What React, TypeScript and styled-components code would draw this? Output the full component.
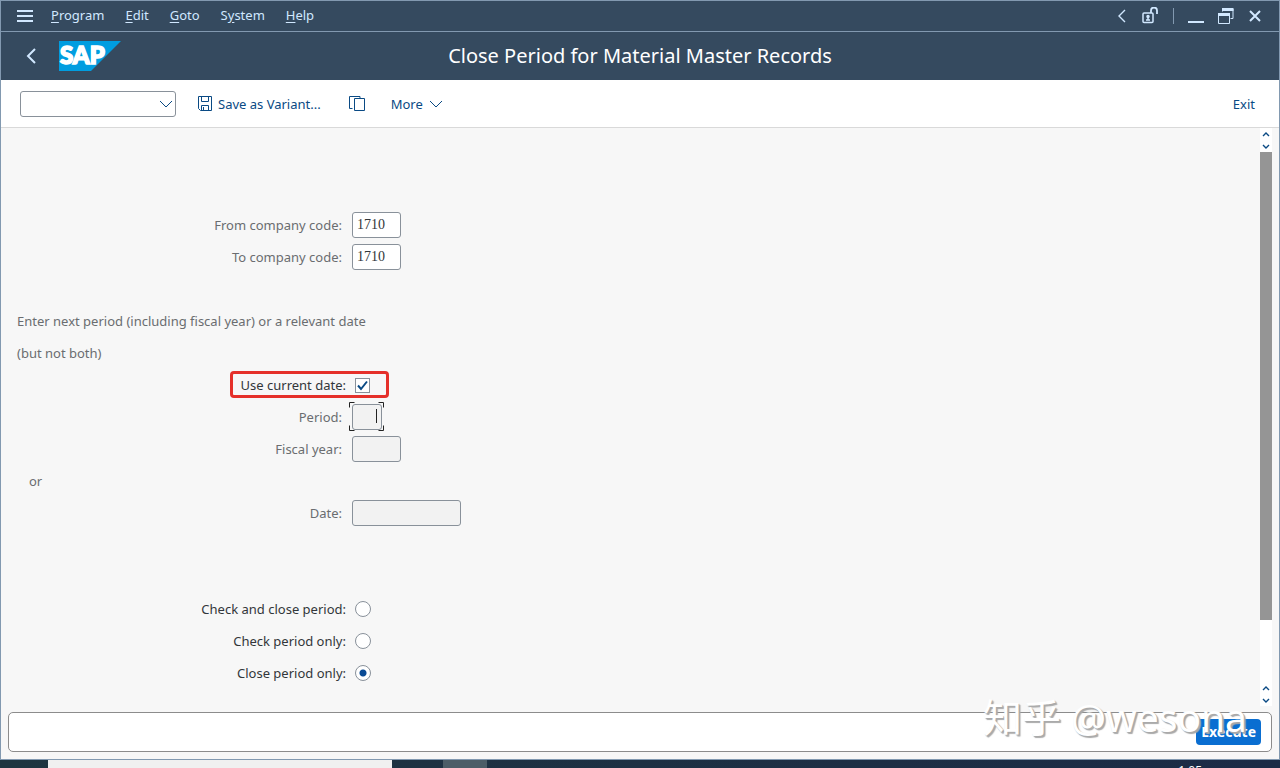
import React from 'react';
import styled, { createGlobalStyle, css } from 'styled-components';

const Global = createGlobalStyle`
  * { box-sizing: border-box; }
  html, body { margin: 0; }
  body, button, input, select {
    font-family: "Noto Sans", sans-serif;
    font-size: 13px;
    line-height: 20px;
  }
`;

const Desktop = styled.div`
  height: 100vh;
  display: flex;
  flex-direction: column;
  overflow: hidden;
  background: #1d2f42;
`;

const Window = styled.section`
  position: relative;
  flex: 1;
  min-height: 0;
  display: flex;
  flex-direction: column;
  border: 1px solid #8299b0;
  background: #f7f7f7;
`;

const MenuBar = styled.header`
  display: flex;
  align-items: center;
  height: 31px;
  padding: 0 17px 0 16px;
  background: #354a5f;
  border-bottom: 1px solid #8299b0;
`;

const Menus = styled.nav`
  display: flex;
  align-items: center;
  gap: 21px;
  margin: 0 auto 0 18px;
`;

const BarButton = styled.button`
  display: flex;
  padding: 0;
  border: 0;
  background: none;
  color: #d1e8ff;
`;

const WindowTools = styled.div`
  display: flex;
  align-items: center;
  gap: 14px;
`;

const Divider = styled.span`
  width: 1px;
  height: 16px;
  background: #8299b0;
`;

const TitleBar = styled.div`
  display: grid;
  grid-template-columns: 1fr auto 1fr;
  align-items: center;
  height: 48px;
  padding: 0 24px;
  background: #354a5f;
`;

const Brand = styled.div`
  display: flex;
  align-items: center;
  gap: 22px;
`;

const Title = styled.h1`
  margin: 0;
  font-size: 20px;
  font-weight: 400;
  line-height: 28px;
  color: #fff;
`;

const Toolbar = styled.div`
  display: flex;
  align-items: center;
  height: 48px;
  padding: 0 24px 0 19px;
  background: #fff;
  border-bottom: 1px solid #d9d9d9;
`;

const CommandField = styled.div`
  display: grid;
  align-items: center;
  width: 156px;
  margin-right: 21px;
  color: #0a4a84;

  > * { grid-area: 1 / 1; }
  svg { justify-self: end; margin-right: 3px; pointer-events: none; }
`;

const CommandSelect = styled.select`
  appearance: none;
  width: 100%;
  height: 26px;
  border: 1px solid #89919a;
  border-radius: 3px;
  background: #fff;
`;

const Action = styled.button<{ $gap?: number }>`
  display: flex;
  align-items: center;
  gap: 6px;
  margin: 0 ${p => p.$gap ?? 0}px 0 0;
  padding: 0;
  border: 0;
  background: none;
  color: #0a4a84;
`;

const Spacer = styled.span`
  flex: 1;
`;

const Body = styled.div`
  flex: 1;
  min-height: 0;
  display: flex;
  padding-right: 7px;
`;

const Form = styled.form`
  flex: 1;
  min-width: 0;
  overflow: hidden;
  padding: 81px 16px 0;
`;

const Row = styled.div<{ $before?: number }>`
  display: grid;
  grid-template-columns: 325px auto;
  justify-content: start;
  align-items: center;
  column-gap: 10px;
  height: 32px;
  margin-top: ${p => (p.$before ?? 0) * 32}px;
  color: #6a6d70;
`;

const ChoiceRow = styled(Row)`
  grid-template-columns: 329px auto;
  column-gap: 9px;
  color: #32363a;
`;

const Label = styled.label`
  justify-self: end;
`;

const Note = styled.p<{ $indent?: boolean; $before?: number }>`
  margin: ${p => (p.$before ?? 0) * 32}px 0 0;
  padding-left: ${p => (p.$indent ? 12 : 0)}px;
  line-height: 32px;
  color: #6a6d70;
`;

const Field = styled.input<{ $width: number }>`
  width: ${p => p.$width}px;
  height: 26px;
  padding: 0 4px;
  border: 1px solid #89919a;
  border-radius: 3px;
  background: #fff;
  color: #32363a;
  font-family: "Liberation Serif", serif;
  font-size: 14px;

  &:read-only { background: #f2f2f2; }
`;

const Focused = styled.div`
  position: relative;
  display: flex;

  svg { position: absolute; left: -3px; top: -2px; }
`;

const boxed = css`
  appearance: none;
  margin: 0;
  border: 1px solid #89919a;
  background: #fff;
`;

const Check = styled.div`
  display: grid;
  align-items: center;

  > * { grid-area: 1 / 1; }
  svg { pointer-events: none; }
`;

const Checkbox = styled.input`
  ${boxed}
  width: 15px;
  height: 15px;
`;

const Radio = styled.input`
  ${boxed}
  width: 16px;
  height: 16px;
  border-radius: 50%;

  &:checked { background: radial-gradient(circle, #0a4a94 3px, #fff 4px); }
`;

const Highlight = styled.span`
  position: absolute;
  left: 229px;
  top: 370px;
  width: 159px;
  height: 27px;
  border: 3px solid #e5302a;
  border-radius: 4px;
  pointer-events: none;
`;

const ScrollBar = styled.div`
  display: flex;
  flex-direction: column;
  width: 12px;
  background: #fff;
`;

const Thumb = styled.div`
  flex: 467;
  background: #959595;
`;

const Track = styled.div`
  flex: 62;
`;

const ScrollButton = styled.button`
  display: flex;
  align-items: center;
  justify-content: center;
  height: 12px;
  padding: 0;
  border: 0;
  background: none;
  color: #0a4a84;
`;

const Footer = styled.footer`
  display: flex;
  align-items: center;
  justify-content: flex-end;
  height: 40px;
  margin: 6px 7px 7px;
  padding: 0 10px;
  border: 1px solid #8c8c8c;
  border-radius: 5px;
  background: #fff;
`;

const Execute = styled.button`
  height: 26px;
  padding: 0 5px;
  border: 0;
  border-radius: 4px;
  background: #0a6ed1;
  color: #fff;
  font-size: 14px;
  font-weight: 700;
`;

const Watermark = styled.span`
  position: absolute;
  right: 32px;
  bottom: 14px;
  font: 39px/56px "Noto Sans", "Noto Sans CJK SC", sans-serif;
  color: #fff;
  text-shadow: 1px 1px 1px #aaa, 2px 2px 1px #aaa;
  white-space: nowrap;
  pointer-events: none;
`;

const TaskBar = styled.div`
  display: flex;
  height: 8px;
  padding-left: 48px;
  overflow: hidden;
  background: linear-gradient(90deg, #1f3540, #1c2b46);
`;

const Search = styled.div`
  width: 344px;
  margin-right: 51px;
  background: #f0f0f0;
`;

const Task = styled.div`
  width: 44px;
  background: #4c5d67;
`;

const Clock = styled.time`
  margin: 4px 78px 0 auto;
  font-size: 12px;
  line-height: 14px;
  color: #fff;
`;

const Chevron = ({ d, w, h, stroke = 1.4 }: { d: string; w: number; h: number; stroke?: number }) => (
  <svg width={w} height={h} viewBox={`0 0 ${w} ${h}`} fill="none" stroke="currentColor" strokeWidth={stroke} aria-hidden>
    <path d={d} />
  </svg>
);

const MenuLink = styled.button`
  padding: 0 0 2px;
  border: 0;
  background: none;
  color: #d1e8ff;

  u { text-underline-offset: 2px; }
`;

const menus = [['', 'P', 'rogram'], ['', 'E', 'dit'], ['', 'G', 'oto'], ['S', 'y', 'stem'], ['', 'H', 'elp']];

const ScrollPair = () => (
  <>
    <ScrollButton type="button" aria-label="Scroll up">
      <Chevron w={8} h={5} d="M1 4 L4 1 L7 4" />
    </ScrollButton>
    <ScrollButton type="button" aria-label="Scroll down">
      <Chevron w={8} h={5} d="M1 1 L4 4 L7 1" />
    </ScrollButton>
  </>
);

export default function App() {
  return (
    <Desktop>
      <Global />
      <Window>
        <MenuBar>
          <BarButton aria-label="Menu">
            <svg width="16" height="14" fill="currentColor"><path d="M0 1h16v2H0zM0 6h16v2H0zM0 11h16v2H0z" /></svg>
          </BarButton>
          <Menus>
            {menus.map(([a, k, b]) => (
              <MenuLink key={k}>{a}<u>{k}</u>{b}</MenuLink>
            ))}
          </Menus>
          <WindowTools>
            <BarButton aria-label="Collapse"><Chevron w={8} h={14} d="M7 1 L1 7 L7 13" /></BarButton>
            <BarButton aria-label="Unlocked">
              <svg width="19" height="18" fill="none" stroke="currentColor" strokeWidth="1.5">
                <rect x="3" y="6" width="10" height="9.500" rx="1" />
                <path d="M11 6V3.500a3 3 0 0 1 6 0V7" strokeWidth="1.800" />
                <circle cx="8" cy="9.500" r="1" fill="currentColor" />
                <path d="M8 10v3.500M6 13h4" />
              </svg>
            </BarButton>
            <Divider />
            <BarButton aria-label="Minimize"><svg width="16" height="16"><path d="M0 13h16v2H0z" fill="currentColor" /></svg></BarButton>
            <BarButton aria-label="Restore">
              <svg width="16" height="16" fill="none" stroke="currentColor">
                <path d="M4.500 3.500V1h10.500v9.500H12.500" /><path d="M4 1.500h11.500" strokeWidth="3" />
                <path d="M.5 6v9.500h11V6" /><path d="M0 6.500h12" strokeWidth="3" />
              </svg>
            </BarButton>
            <BarButton aria-label="Close"><Chevron w={14} h={12} stroke={2} d="M2 1 L12 11 M12 1 L2 11" /></BarButton>
          </WindowTools>
        </MenuBar>

        <TitleBar>
          <Brand>
            <BarButton aria-label="Back"><Chevron w={12} h={16} stroke={2} d="M10 1 L3 8 L10 15" /></BarButton>
            <svg width="62" height="30" role="img" aria-label="SAP">
              <path d="M0 0h62L32 30H0z" fill="#009de0" />
              <text x="1" y="23" fontFamily="Lato, sans-serif" fontSize="24" fontWeight="900" fill="#fff" stroke="#fff" strokeWidth="1.600">SAP</text>
            </svg>
          </Brand>
          <Title>Close Period for Material Master Records</Title>
        </TitleBar>

        <Toolbar>
          <CommandField>
            <CommandSelect aria-label="Command"><option></option></CommandSelect>
            <Chevron w={14} h={8} stroke={1} d="M1 1 L7 7 L13 1" />
          </CommandField>
          <Action $gap={28}>
            <svg width="15" height="15" fill="none" stroke="currentColor">
              <path d="M1.500.5h13v14h-11l-2-2zM4.500.5v5h7v-5M4.500 14.500v-5h7v5M6.500 11v3" />
            </svg>
            Save as Variant...
          </Action>
          <Action $gap={26} aria-label="Get variant">
            <svg width="16" height="16" fill="none" stroke="currentColor">
              <path d="M3.500 12.500H.5V.5h10.500V2.500M5.500 2.500h10v12h-10z" />
            </svg>
          </Action>
          <Action>More<Chevron w={14} h={8} stroke={1} d="M1 1 L7 7 L13 1" /></Action>
          <Spacer />
          <Action>Exit</Action>
        </Toolbar>

        <Body>
          <Form onSubmit={e => e.preventDefault()}>
            <Row>
              <Label htmlFor="from">From company code:</Label>
              <Field id="from" $width={49} defaultValue="1710" />
            </Row>
            <Row>
              <Label htmlFor="to">To company code:</Label>
              <Field id="to" $width={49} defaultValue="1710" />
            </Row>
            <Note $before={1}>Enter next period (including fiscal year) or a relevant date</Note>
            <Note>(but not both)</Note>
            <ChoiceRow>
              <Label htmlFor="current">Use current date:</Label>
              <Check>
                <Checkbox id="current" type="checkbox" defaultChecked />
                <svg width="15" height="15" fill="none" stroke="#0a4a84" strokeWidth="2"><path d="M3 7.500l3 3.500 6-7.500" /></svg>
              </Check>
            </ChoiceRow>
            <Row>
              <Label htmlFor="period">Period:</Label>
              <Focused>
                <Field id="period" $width={30} readOnly />
                <svg width="36" height="30" fill="none" stroke="#222" aria-hidden>
                  <path d="M.5 5.500v-5h5M29.500.5h5v5M34.500 23.500v5h-5M5.500 28.500h-5v-5M27.500 7v14" />
                </svg>
              </Focused>
            </Row>
            <Row>
              <Label htmlFor="year">Fiscal year:</Label>
              <Field id="year" $width={49} readOnly />
            </Row>
            <Note $indent>or</Note>
            <Row>
              <Label htmlFor="date">Date:</Label>
              <Field id="date" $width={109} readOnly />
            </Row>
            <ChoiceRow $before={2}>
              <Label htmlFor="both">Check and close period:</Label>
              <Radio id="both" type="radio" name="mode" />
            </ChoiceRow>
            <ChoiceRow>
              <Label htmlFor="check">Check period only:</Label>
              <Radio id="check" type="radio" name="mode" />
            </ChoiceRow>
            <ChoiceRow>
              <Label htmlFor="close">Close period only:</Label>
              <Radio id="close" type="radio" name="mode" defaultChecked />
            </ChoiceRow>
          </Form>
          <ScrollBar>
            <ScrollPair />
            <Thumb />
            <Track />
            <ScrollPair />
          </ScrollBar>
        </Body>

        <Footer><Execute>Execute</Execute></Footer>
        <Highlight />
        <Watermark>知乎 @wesona</Watermark>
      </Window>
      <TaskBar><Search /><Task /><Clock>1:05</Clock></TaskBar>
    </Desktop>
  );
}
